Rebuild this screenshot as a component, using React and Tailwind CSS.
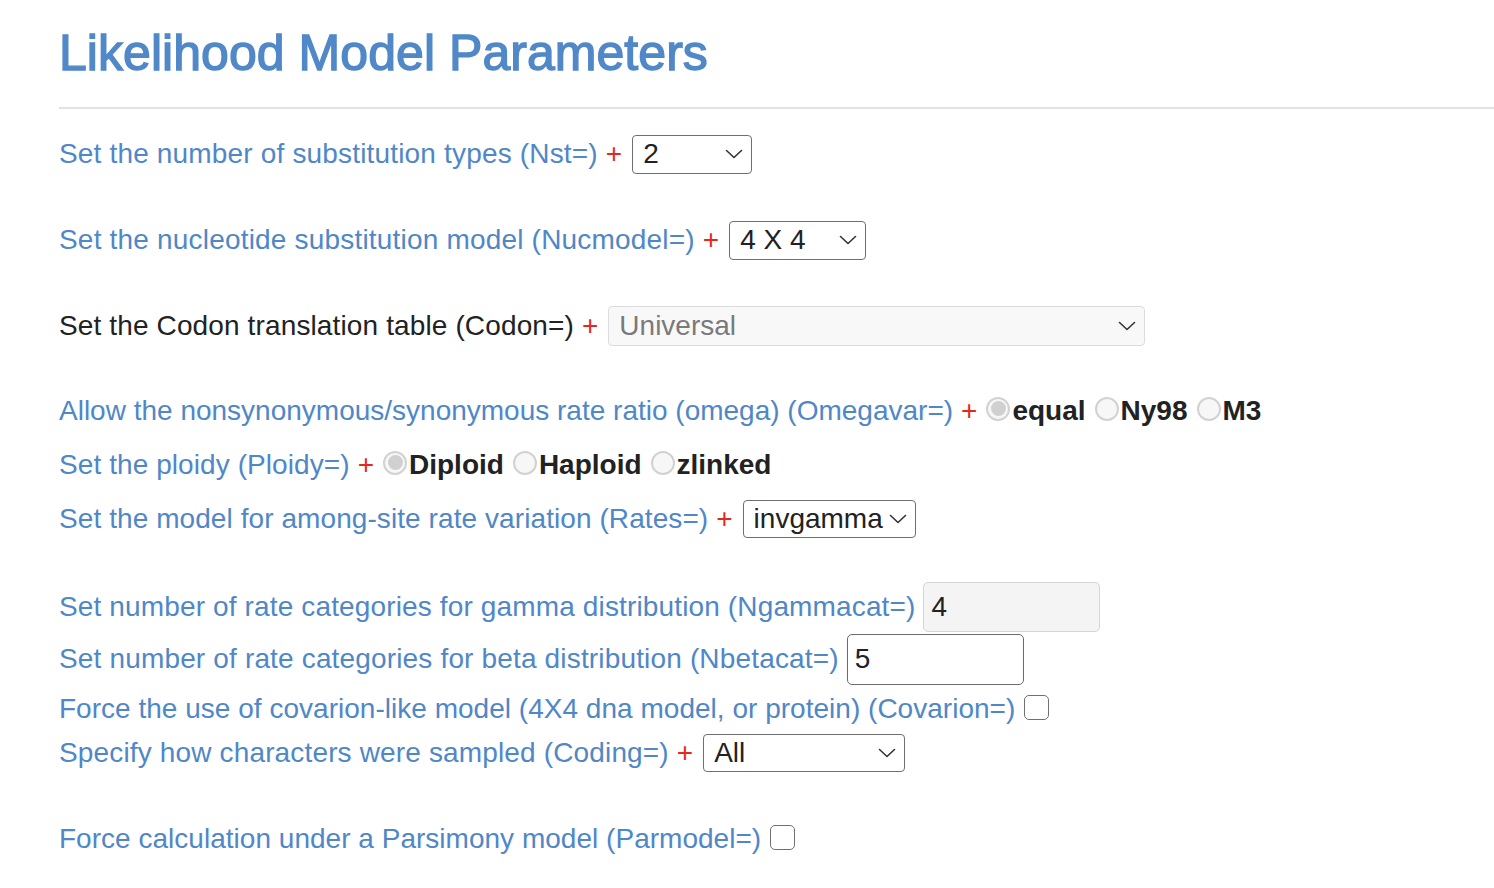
import React from "react";

const BLUE = "text-[#4f87c7]";

function Chevron() {
  return (
    <svg width="18" height="10" viewBox="0 0 18 10" fill="none" className="shrink-0">
      <path d="M1.5 1.5 L9 8.5 L16.5 1.5" stroke="#333" strokeWidth="1.6" strokeLinecap="round" strokeLinejoin="round" />
    </svg>
  );
}

function Select({ value, w, h = "h-[39px]", disabled = false }) {
  return (
    <div
      className={`${w} ${h} ml-[10px] flex items-center justify-between pl-[10px] pr-[8px] rounded-[4px] border-[1.5px] ${
        disabled ? "border-[#dcdcdc] bg-[#f8f8f8] text-[#7a7a7a]" : "border-[#6f6f6f] bg-white text-[#222]"
      }`}
    >
      <span>{value}</span>
      <Chevron />
    </div>
  );
}

function Plus() {
  return <span className="ml-[8px] text-[#e5281d]">+</span>;
}

function Radio({ checked }) {
  return (
    <span className="ml-[9px] mb-[5px] w-[24px] h-[24px] rounded-full border-[2px] border-[#d2d2d2] bg-[#f7f7f7] flex items-center justify-center shrink-0">
      {checked && <span className="w-[15px] h-[15px] rounded-full bg-[#d0d0d0]" />}
    </span>
  );
}

function RadioLabel({ children }) {
  return <span className="ml-[2px] font-bold text-[#222]">{children}</span>;
}

function Checkbox() {
  return <span className="ml-[9px] mb-[4px] w-[25px] h-[25px] rounded-[5px] border-[1.5px] border-[#707070] bg-white shrink-0" />;
}

export default function App() {
  return (
    <div className="min-h-[888px] w-full bg-white font-['Liberation_Sans',Arial,Helvetica,sans-serif] pl-[59px] overflow-hidden">
      <h1 className="pt-[28px] h-[78px] text-[50px] leading-[50px] font-normal text-[#5088c8] [-webkit-text-stroke:1.4px_#5088c8] whitespace-nowrap tracking-[0.05px]">
        Likelihood Model Parameters
      </h1>
      <div className="mt-[29px] h-[2px] bg-[#e2e2e2]" />

      <div className="text-[28px] leading-[32px] whitespace-nowrap">
        <div className="mt-[25px] h-[40px] flex items-center">
          <span className={`${BLUE} tracking-[0.17px]`}>Set the number of substitution types (Nst=)</span>
          <Plus />
          <Select value="2" w="w-[120px]" />
        </div>

        <div className="mt-[46px] h-[40px] flex items-center">
          <span className={`${BLUE} tracking-[0.19px]`}>Set the nucleotide substitution model (Nucmodel=)</span>
          <Plus />
          <Select value="4 X 4" w="w-[137px]" />
        </div>

        <div className="mt-[46px] h-[40px] flex items-center">
          <span className="text-[#222] tracking-[0.13px]">Set the Codon translation table (Codon=)</span>
          <Plus />
          <Select value="Universal" w="w-[537px]" h="h-[40px]" disabled />
        </div>

        <div className="mt-[45px] h-[40px] flex items-center">
          <span className={BLUE}>Allow the nonsynonymous/synonymous rate ratio (omega) (Omegavar=)</span>
          <Plus />
          <Radio checked />
          <RadioLabel>equal</RadioLabel>
          <Radio />
          <RadioLabel>Ny98</RadioLabel>
          <Radio />
          <RadioLabel>M3</RadioLabel>
        </div>

        <div className="mt-[14px] h-[40px] flex items-center">
          <span className={`${BLUE} tracking-[0.08px]`}>Set the ploidy (Ploidy=)</span>
          <Plus />
          <Radio checked />
          <RadioLabel>Diploid</RadioLabel>
          <Radio />
          <RadioLabel>Haploid</RadioLabel>
          <Radio />
          <RadioLabel>zlinked</RadioLabel>
        </div>

        <div className="mt-[14px] h-[40px] flex items-center">
          <span className={`${BLUE} tracking-[0.08px]`}>Set the model for among-site rate variation (Rates=)</span>
          <Plus />
          <Select value="invgamma" w="w-[173px]" h="h-[38px]" />
        </div>

        <div className="mt-[43px] h-[50px] flex items-center">
          <span className={`${BLUE} tracking-[0.14px]`}>Set number of rate categories for gamma distribution (Ngammacat=)</span>
          <div className="ml-[8px] w-[177px] h-[50px] rounded-[5px] border-[1.5px] border-[#d5d5d5] bg-[#f4f4f4] pl-[7px] flex items-center text-[#222]">
            4
          </div>
        </div>

        <div className="mt-[2px] h-[50px] flex items-center">
          <span className={`${BLUE} tracking-[0.16px]`}>Set number of rate categories for beta distribution (Nbetacat=)</span>
          <div className="ml-[8px] w-[177px] h-[51px] rounded-[5px] border-[1.5px] border-[#6b6b6b] bg-white pl-[7px] flex items-center text-[#222]">
            5
          </div>
        </div>

        <div className="mt-[5px] h-[40px] flex items-center">
          <span className={`${BLUE} tracking-[0.02px]`}>Force the use of covarion-like model (4X4 dna model, or protein) (Covarion=)</span>
          <Checkbox />
        </div>

        <div className="mt-[4px] h-[40px] flex items-center">
          <span className={`${BLUE} tracking-[0.15px]`}>Specify how characters were sampled (Coding=)</span>
          <Plus />
          <Select value="All" w="w-[202px]" h="h-[38px]" />
        </div>

        <div className="mt-[46px] h-[40px] flex items-center">
          <span className={`${BLUE} tracking-[0.02px]`}>Force calculation under a Parsimony model (Parmodel=)</span>
          <Checkbox />
        </div>
      </div>
    </div>
  );
}
